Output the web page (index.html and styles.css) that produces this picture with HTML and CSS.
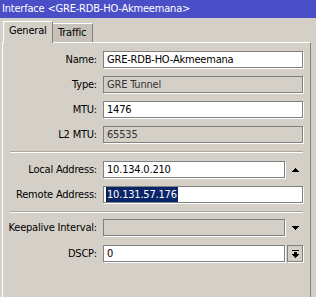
FILE: index.html
```html
<!DOCTYPE html>
<html>
<head>
<meta charset="utf-8">
<link rel="stylesheet" href="styles.css">
</head>
<body>
<div class="title">Interface &lt;GRE-RDB-HO-Akmeemana&gt;</div>
<div class="tabs">
  <div class="tab active">General</div>
  <div class="tab">Traffic</div>
</div>
<div class="panel">
  <div class="row"><span class="label">Name:</span><div class="field">GRE-RDB-HO-Akmeemana</div></div>
  <div class="row"><span class="label">Type:</span><div class="field disabled">GRE Tunnel</div></div>
  <div class="row"><span class="label">MTU:</span><div class="field">1476</div></div>
  <div class="row last"><span class="label">L2 MTU:</span><div class="field disabled">65535</div></div>
  <div class="sep"></div>
  <div class="row"><span class="label">Local Address:</span><div class="field short">10.134.0.210</div>
    <div class="slot"><svg class="arrow" width="7" height="4" viewBox="0 0 7 4" shape-rendering="crispEdges"><rect x="3" y="0" width="1" height="1"/><rect x="2" y="1" width="3" height="1"/><rect x="1" y="2" width="5" height="1"/><rect x="0" y="3" width="7" height="1"/></svg></div>
  </div>
  <div class="row last"><span class="label">Remote Address:</span><div class="field sel-field"><span class="caret"></span><span class="selected">10.131.57.176</span></div></div>
  <div class="sep sep2"></div>
  <div class="row ka"><span class="label">Keepalive Interval:</span><div class="field short disabled"></div>
    <div class="slot"><svg class="arrow" width="7" height="4" viewBox="0 0 7 4" shape-rendering="crispEdges"><rect x="0" y="0" width="7" height="1"/><rect x="1" y="1" width="5" height="1"/><rect x="2" y="2" width="3" height="1"/><rect x="3" y="3" width="1" height="1"/></svg></div>
  </div>
  <div class="row"><span class="label">DSCP:</span><div class="field short">0</div>
    <div class="slot button"><svg width="7" height="8" viewBox="0 0 7 8" shape-rendering="crispEdges"><rect x="0" y="0" width="7" height="1"/><rect x="2" y="2" width="3" height="2"/><rect x="0" y="4" width="7" height="1"/><rect x="1" y="5" width="5" height="1"/><rect x="2" y="6" width="3" height="1"/><rect x="3" y="7" width="1" height="1"/></svg></div>
  </div>
</div>
</body>
</html>
```
FILE: styles.css
```css
html, body {
  margin: 0;
  padding: 0;
}
body {
  width: 316px;
  height: 297px;
  overflow: hidden;
  background: #d4d0c8;
  font: 11px "DejaVu Sans Condensed", "DejaVu Sans", sans-serif;
  font-stretch: condensed;
  letter-spacing: -0.2px;
  color: #000;
  display: flex;
  flex-direction: column;
}
.title {
  height: 18px;
  line-height: 18px;
  background: #4a4fc8;
  color: #fff;
  padding-left: 2px;
  white-space: nowrap;
}
.tabs {
  height: 24px;
  display: flex;
  align-items: flex-end;
  padding-left: 3px;
}
.tab {
  box-sizing: border-box;
  height: 19px;
  width: 40px;
  padding-left: 5px;
  line-height: 18px;
  background: #c6c2ba;
  border-top: 1px solid #fff;
  border-right: 1px solid #808080;
}
.tab.active {
  position: relative;
  z-index: 1;
  width: 50px;
  height: 22px;
  margin-bottom: -1px;
  padding-left: 5px;
  line-height: 17px;
  background: #d4d0c8;
  border-left: 1px solid #fff;
  border-right: 1px solid #808080;
}
.panel {
  flex: 1;
  margin-left: 2px;
  margin-right: 5px;
  border-top: 1px solid #fff;
  border-left: 1px solid #fff;
  border-right: 1px solid #808080;
  padding-top: 8px;
}
.row {
  display: flex;
  align-items: center;
  height: 17px;
  margin-bottom: 8px;
}
.row.ka {
  margin-bottom: 9px;
}
.label {
  width: 94px;
  margin-right: 6px;
  text-align: right;
  white-space: nowrap;
}
.field {
  box-sizing: border-box;
  width: 200px;
  height: 17px;
  line-height: 15px;
  padding: 0 3px;
  background: #fff;
  border: 1px solid #808080;
  box-shadow: 1px 1px 0 #fff;
  white-space: nowrap;
  overflow: hidden;
}
.field.short {
  width: 182px;
}
.field.disabled {
  background: #d4d0c8;
  color: #333;
}
.sel-field {
  display: flex;
  padding-left: 2px;
}
.caret {
  width: 1px;
  height: 15px;
  background: #1a1a1a;
}
.selected {
  background: #0a246a;
  color: #fff;
  padding-right: 1px;
}
.sep {
  height: 1px;
  margin: 1px 7px 8px 7px;
  background: #aaa69e;
  border-bottom: 1px solid #fff;
}
.sep2 {
  margin-top: 2px;
  margin-bottom: 6px;
}
.slot {
  box-sizing: border-box;
  width: 16px;
  height: 17px;
  margin-left: 2px;
  display: flex;
  align-items: center;
  justify-content: center;
}
.slot.button {
  border: 1px solid #808080;
  box-shadow: 1px 1px 0 #fff;
  background: #d4d0c8;
}
.arrow {
  display: block;
}
svg {
  fill: #000;
}
```
